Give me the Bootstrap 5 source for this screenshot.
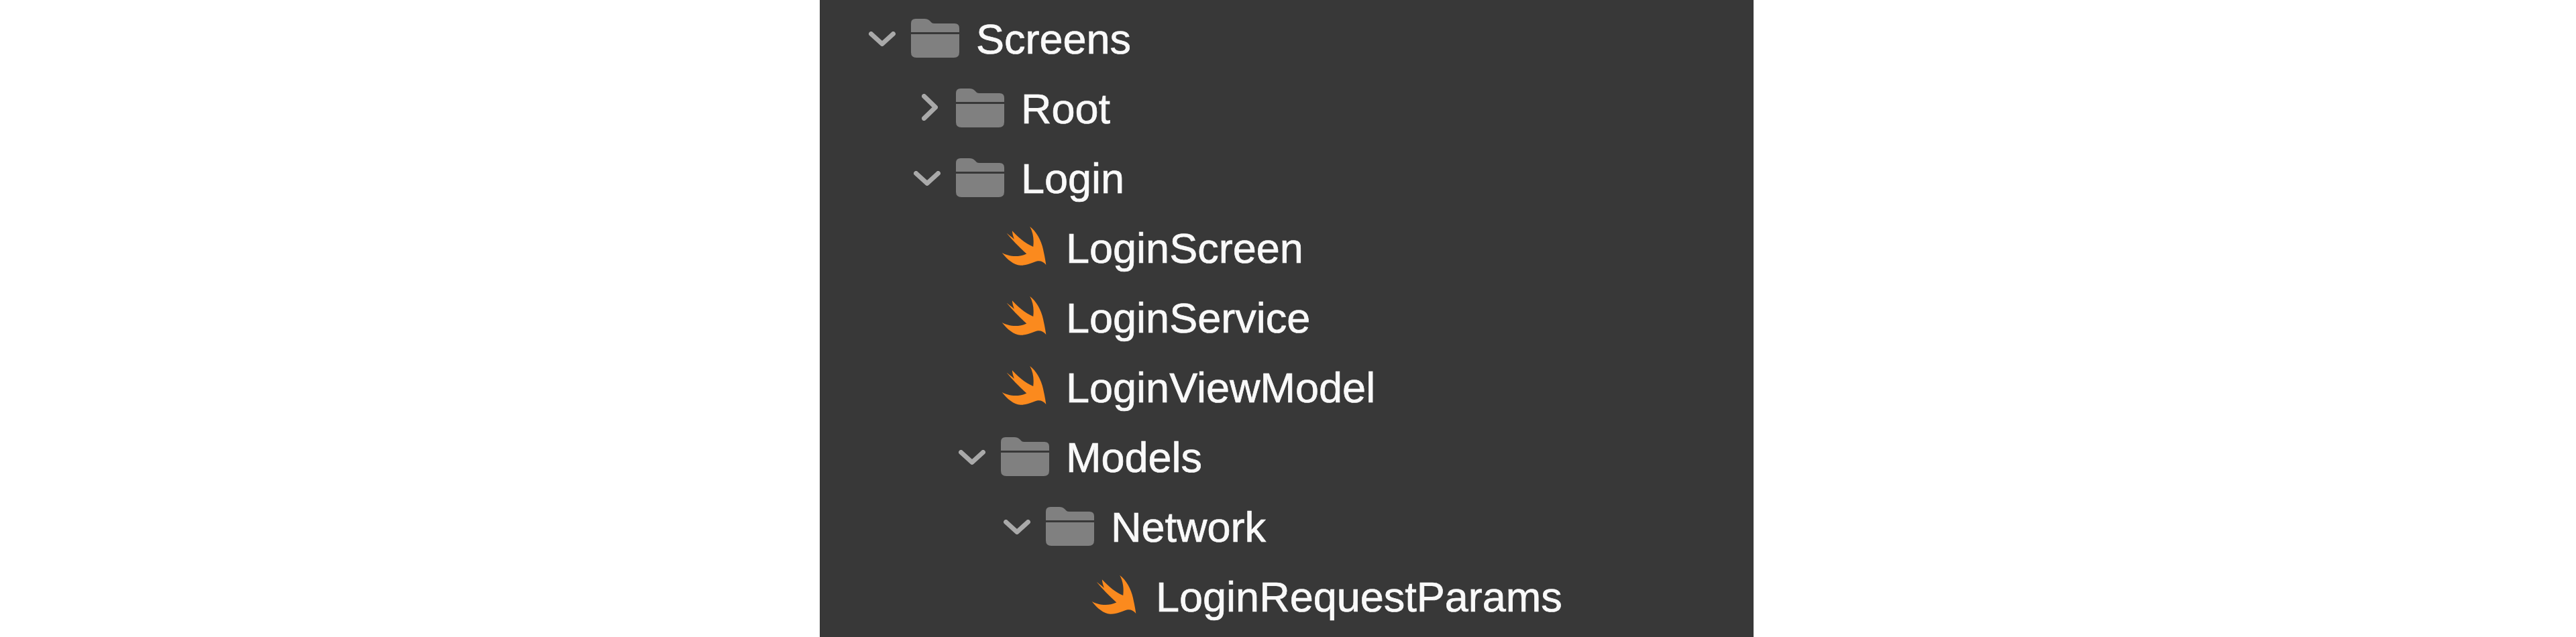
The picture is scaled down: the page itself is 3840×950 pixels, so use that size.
<!DOCTYPE html>
<html lang="en">
<head>
<meta charset="utf-8">
<title>Project navigator</title>
<link href="https://cdn.jsdelivr.net/npm/bootstrap@5.3.0/dist/css/bootstrap.min.css" rel="stylesheet">
<style>
html, body { height: 100%; background: #fff; overflow: hidden; }
.nav-panel { width: 1392px; height: 950px; background: #383838; padding-top: 6px; overflow: hidden; }
.tree-list { filter: blur(.6px); }
.tree-row { height: 104px; color: #f9f9f9; font: 63px/1 "Liberation Sans", Arial, sans-serif; -webkit-text-stroke: .7px #f9f9f9; }
.depth-0 { padding-left: 59px; }
.depth-1 { padding-left: 126px; }
.depth-2 { padding-left: 193px; }
.depth-3 { padding-left: 260px; }
.depth-4 { padding-left: 327px; }
.twist-slot { width: 67px; margin-right: 10px; }
.chev-down { width: 40px; height: 22px; }
.chev-right { width: 24px; height: 40px; margin-left: 9px; margin-bottom: 4px; }
.icon-slot { width: 72px; margin-right: 25px; }
.folder-ico { width: 72px; height: 58px; margin-bottom: 2px; }
.swift-ico { width: 67px; height: 60px; margin-left: 1px; margin-bottom: 6px; }
</style>
</head>
<body class="pe-1">
<svg width="0" height="0" class="d-block" aria-hidden="true">
  <defs>
    <symbol id="sym-folder" viewBox="0 0 72 58">
      <path fill="#808080" d="M0 20V7Q0 0 7 0H20Q25 0 28 3L31 6Q32 7 35 7H65Q72 7 72 14V20Z"/>
      <path fill="#808080" d="M0 23H72V50Q72 58 64 58H8Q0 58 0 50Z"/>
    </symbol>
    <symbol id="sym-chev-down" viewBox="0 0 40 22">
      <path fill="none" stroke="#a9a9a9" stroke-width="7" stroke-linecap="round" stroke-linejoin="round" d="M3.5 3.5L20 18.500L36.500 3.500"/>
    </symbol>
    <symbol id="sym-chev-right" viewBox="0 0 24 40">
      <path fill="none" stroke="#a9a9a9" stroke-width="7" stroke-linecap="round" stroke-linejoin="round" d="M3.500 3.500L20.500 20L3.500 36.500"/>
    </symbol>
    <symbol id="sym-swift" viewBox="155 25 203 180">
      <path fill="#fb8a1e" d="M283 27C310 45 335 90 343 130C347 150 352 170 356 200C345 185 330 180 315 183C295 188 270 203 240 202C210 200 180 175 157 145C180 158 225 170 268 150C235 120 205 90 178 57C195 70 205 78 212 84C208 72 204 60 203 46C235 80 265 105 298 118C302 85 298 55 283 27Z"/>
    </symbol>
  </defs>
</svg>
<main class="nav-panel mx-auto">
  <ul class="tree-list list-unstyled m-0">
    <li class="tree-row depth-0 d-flex align-items-center">
      <span class="twist-slot d-flex justify-content-center"><svg class="chev-down"><use href="#sym-chev-down"/></svg></span>
      <span class="icon-slot d-flex"><svg class="folder-ico"><use href="#sym-folder"/></svg></span>
      <span>Screens</span>
    </li>
    <li class="tree-row depth-1 d-flex align-items-center">
      <span class="twist-slot d-flex justify-content-center"><svg class="chev-right"><use href="#sym-chev-right"/></svg></span>
      <span class="icon-slot d-flex"><svg class="folder-ico"><use href="#sym-folder"/></svg></span>
      <span>Root</span>
    </li>
    <li class="tree-row depth-1 d-flex align-items-center">
      <span class="twist-slot d-flex justify-content-center"><svg class="chev-down"><use href="#sym-chev-down"/></svg></span>
      <span class="icon-slot d-flex"><svg class="folder-ico"><use href="#sym-folder"/></svg></span>
      <span>Login</span>
    </li>
    <li class="tree-row depth-2 d-flex align-items-center">
      <span class="twist-slot"></span>
      <span class="icon-slot d-flex"><svg class="swift-ico"><use href="#sym-swift"/></svg></span>
      <span>LoginScreen</span>
    </li>
    <li class="tree-row depth-2 d-flex align-items-center">
      <span class="twist-slot"></span>
      <span class="icon-slot d-flex"><svg class="swift-ico"><use href="#sym-swift"/></svg></span>
      <span>LoginService</span>
    </li>
    <li class="tree-row depth-2 d-flex align-items-center">
      <span class="twist-slot"></span>
      <span class="icon-slot d-flex"><svg class="swift-ico"><use href="#sym-swift"/></svg></span>
      <span>LoginViewModel</span>
    </li>
    <li class="tree-row depth-2 d-flex align-items-center">
      <span class="twist-slot d-flex justify-content-center"><svg class="chev-down"><use href="#sym-chev-down"/></svg></span>
      <span class="icon-slot d-flex"><svg class="folder-ico"><use href="#sym-folder"/></svg></span>
      <span>Models</span>
    </li>
    <li class="tree-row depth-3 d-flex align-items-center">
      <span class="twist-slot d-flex justify-content-center"><svg class="chev-down"><use href="#sym-chev-down"/></svg></span>
      <span class="icon-slot d-flex"><svg class="folder-ico"><use href="#sym-folder"/></svg></span>
      <span>Network</span>
    </li>
    <li class="tree-row depth-4 d-flex align-items-center">
      <span class="twist-slot"></span>
      <span class="icon-slot d-flex"><svg class="swift-ico"><use href="#sym-swift"/></svg></span>
      <span>LoginRequestParams</span>
    </li>
  </ul>
</main>
<script src="https://cdn.jsdelivr.net/npm/bootstrap@5.3.0/dist/js/bootstrap.bundle.min.js"></script>
</body>
</html>
